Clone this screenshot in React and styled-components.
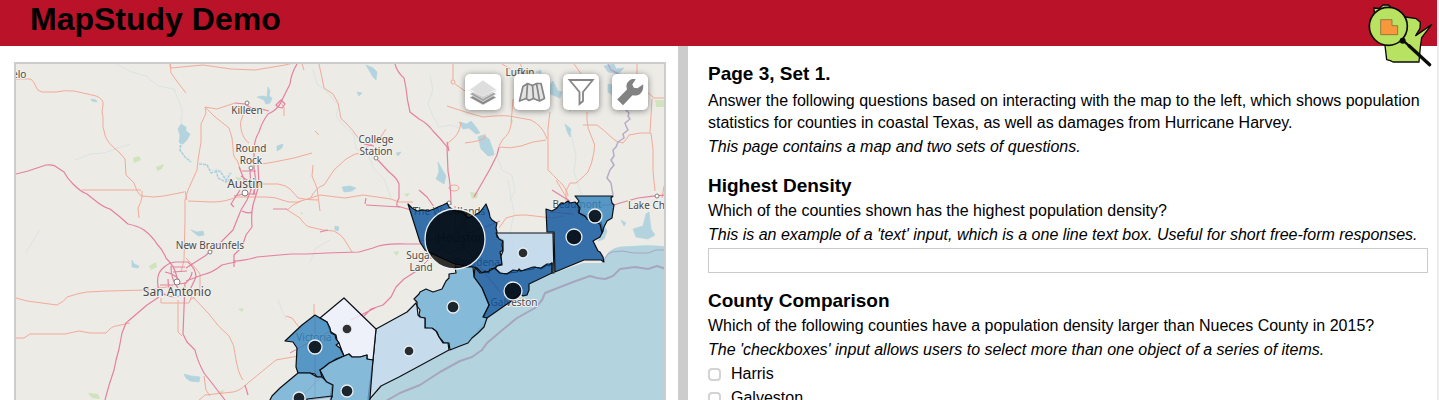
import React from "react";
import styled, { createGlobalStyle } from "styled-components";

const GlobalStyle = createGlobalStyle`
  * { box-sizing: border-box; }
  html, body, #root { height: 100%; }
  body {
    margin: 0;
    overflow: hidden;
    background: #fff;
    color: #000;
    font-family: "Liberation Sans", Arial, Helvetica, sans-serif;
    font-size: 16px;
    line-height: 22px;
  }
`;

const Page = styled.div`
  height: 100vh;
  display: flex;
  flex-direction: column;
  overflow: hidden;
  border-right: 2px solid #ececec;
`;

const Header = styled.header`
  position: relative;
  z-index: 2;
  flex: none;
  height: 46px;
  padding: 0 30px;
  background: #b91229;
`;

const Title = styled.h1`
  margin: 0;
  font-size: 32px;
  line-height: 38px;
  font-weight: bold;
`;

const LogoLink = styled.a`
  position: absolute;
  top: 3px;
  right: 3px;
  svg { display: block; }
`;

const Columns = styled.main`
  flex: 1;
  min-height: 0;
  display: grid;
  grid-template-columns: 678fr 10px 749fr;
`;

const MapPane = styled.section`
  min-width: 0;
  padding: 16px 12px 0 14px;
  display: flex;
`;

const MapFrame = styled.div`
  position: relative;
  flex: 1;
  min-width: 0;
  border: 2px solid #ccc;
  border-bottom: 0;
  background: #ecebe6;
  overflow: hidden;
`;

const MapArt = styled.svg`
  display: block;
  width: 100%;
  height: 100%;
  font-family: "Noto Sans", sans-serif;
`;

const Toolbar = styled.div`
  position: absolute;
  top: 10px;
  right: 16px;
  display: flex;
  gap: 13px;
`;

const ToolButton = styled.button`
  width: 36px;
  height: 36px;
  padding: 4px;
  border: 0;
  border-radius: 5px;
  background: #fff;
  box-shadow: 0 1px 6px rgba(0, 0, 0, 0.45);
  cursor: pointer;
  svg { display: block; width: 28px; height: 28px; }
`;

const Divider = styled.div`
  background: #ccc;
`;

const Questions = styled.section`
  min-width: 0;
  padding: 17px 9px 0 20px;
  overflow: hidden;
`;

const PageHeading = styled.h2`
  margin: 0 0 5px;
  font-size: 19px;
  line-height: 22px;
`;

const Block = styled.form`
  margin-top: 17px;
`;

const BlockHeading = styled.h3`
  margin: 0 0 3px;
  font-size: 19px;
  line-height: 22px;
`;

const Text = styled.p`
  margin: 0 0 2px;
`;

const Hint = styled.p`
  margin: 0 0 2px;
  font-style: italic;
`;

const TextInput = styled.input`
  display: block;
  width: 100%;
  height: 25px;
  padding: 2px 6px;
  border: 1px solid #ccc;
  background: #fff;
  font: inherit;
`;

const Option = styled.label`
  display: flex;
  align-items: center;
  gap: 10px;
  margin-bottom: 2px;
`;

const Checkbox = styled.input`
  appearance: none;
  width: 13px;
  height: 13px;
  margin: 0;
  border: 2px solid #d3d3d3;
  border-radius: 4px;
  background: #fff;
  &:checked { background: #08519c; }
`;

const WATER = "#b3d4de";

const lakes = [
  "M181 124l5 3v4l4 3-3 6-4 4-4-2 1-7-2-6z",
  "M268 87l2 4-1 5 3 2-2 5-4 1-2-4-7-3 6-1 4 1z",
  "M91 99l5 1 1 2-5-1z",
  "M277 146l6-2-1 4-5 3z",
  "M191 230l6 2 6-1 1 4-6 1z",
  "M132 260l2 4 5 2-1 2-6-1z",
  "M184 374l7 2 9 1-1 5-9-1-4-3z",
  "M342 187l8-1 6 2-4 3-8 1z",
  "M366 65l7 3 4 4-1 8-3-3-4-7z",
  "M357 92l5 1-3 3z",
  "M396 153l5-1-3 4z",
  "M438 162l5 9 3 5-2 8-8-5 3-7z",
  "M478 137l5-2 6 4 4 11 1 5-6 1-7-7z",
  "M459 122l8 2 4-3 5 6 4 6-4 1-7-6-6 1z",
  "M545 82l5 3 3-4 5 10 4 1-2 6-7-3-5-1z",
  "M604 66l10-2 2 5 8-1-4 4-1 8-5-7-6-1z",
  "M608 84l4 1v10l-4-3z",
  "M565 124l6 5-1 8-3-6z",
  "M536 72l5-2v4z",
  "M633 229l10-3 3-12 3-2 2 17 4 6-7 4-12-2z",
  "M603 224l4 7-3 8-6 2 4-8z",
  "M621 220l5 3-2 3z",
  "M335 226l4 1-1 4-3-1z",
  "M567 107l4 1-1 3z",
];

const rivers = [
  "M181 118l1 10M183 141l-3 10 5 6 5 5M200 163l6 1 5 7 7-2 7 8 5-5",
  "M116 64l16 8 14 4 12 10 16 3 8 20v12",
  "M75 160l16-6 13-1 14-5 12-4",
  "M313 70l4 14 10 8 12 14-3 10 8 10 10 9 2 14 12 6 6 14 10 10 7 18",
  "M430 76l3 14-5 14 5 12 6 11 12-2 9 3",
  "M496 154l6 16 10 5 3 16-6 10",
  "M571 134l5 22-2 16 8 24",
  "M612 96l5 10",
  "M508 180l6 34-4 18 4 16",
  "M310 262l6-14 14-8",
  "M278 300l8 20M40 230l-14 22",
];

const greens = [
  "M133 158l6-2 2 4-7 3z",
  "M156 167l8-3-2 5-5 2z",
  "M149 266l7-4 1 5-6 3z",
  "M235 177l7 1-3 4z",
  "M238 309l6-1-2 4z",
  "M88 393l10 1 2 5-8-1z",
  "M217 392l7-2-2 4z",
  "M470 192l8 1-1 5-5 1z",
  "M655 100h10v7h-9z",
  "M404 194l6-1-3 4z",
  "M393 252l6-1-2 5z",
  "M510 119l3 1-1 4z",
  "M300 212l3 1-1 2z",
];

const minorRoads = [
  "M16 79h15q4 4 5 8t6 5l14 0q8-2 18-1 14 3 22 5 8 3 7 9-2 8 0 12-1 10 2 18 2 8 14 17l6 7 1 16 8 8 3 8q2 4 6 6M82 190h59M142 191v6q-1 6-4 11l1 10M142 196q12 2 22 0l20-4M185 191l2 9",
  "M170 64l1 4 32-3 28 4 24 1 30-5 13-3M170 64l1 9 8 11 7 9",
  "M205 107l9 9 15 12q4 10 4 20t4 12l4 11M205 107l1 6-5 11v18l-3 18-1 10-9 20-3 10v20l-1 40-3 12",
  "M205 107l12 2 18-6M243 115q-4 8-2 14 2 10 8 14",
  "M188 201l24 1q14 0 24-5h30q10 0 16 3t16 2l22-7 25 3 18-3 28 4 8 3 14 0",
  "M262 184h16q8 1 12 5t8 9q8 2 20 2M310 199q6-12 14-14l10-15 12-11 9-5q8-1 13 0M287 210q6-6 14-9",
  "M262 164l12-2 20-4 18-5M313 165l-1 11 5 12 3 23",
  "M315 131l4 4",
  "M286 209l14 9q6 9 10 9 14 4 24 4 8 4 10 8l8 13",
  "M319 64l3 14 2 10 9 6 5 9 2 10q0 6 5 9 8 8 14 17M386 129l-8 12-14 7",
  "M302 64l2 6M279 101l5 6v9",
  "M453 64v16M455 84l10 7 10 8M447 106q24 8 36 11 18-2 26-1l22 4q12 6 16 19",
  "M520 64l8 12M513 99l-2 26q-2 10-8 14l-4 7M465 143q16-2 20-5v-4",
  "M499 147q12 2 22-1l12-4 13-2M550 112l-2 16v42q10 10 14 14 6 8 6 12",
  "M587 112v8q0 8 5 18 4 6 2 14-2 12-6 20-8 8-12 11h-6l-4 8v14M583 125h14q8 6 14 12 6 6 12 6 4-4 6-8 12-3 22-2l2 16v22l2 20",
  "M637 64v12q2 10 8 14l9 8h12M652 99l-2 33M574 64l8 11M502 64l20 12",
  "M16 298l11 3 30 4q8-4 10-8 12-4 20-5l20-1 40-1 26-4",
  "M16 338h8l6-4 35 0 14-3 11 2 16 0q6-7 10-7l14-3",
  "M178 300v32l4 4M161 298v5h28l3-8M193 297l16 17q10 14 20 22 6 10 6 18 3 20 8 26",
  "M298 356l-22 4-28 23q-8 8-15 9l-28 3-7 6M204 376l2 14 4 6",
  "M286 316l6 2 7 9M314 304v12M186 258q10 10 14 16v14q-2 8-10 12",
  "M499 228l7-10q10-4 20-3l26 3 12-2M556 180l12 20 2 12M664 186l-2 12",
  "M446 146q2-4 8-8 6-6 7-16",
];

const majorRoads = [
  "M297 64q-6 10-7 20l-8 16q-4 10-14 14-6 8-9 18-4 6-5 16v20l2 14q-2 8-2 12M250 170l1 20-4 10-6 10-8 20-12 12-16 14-19 12",
  "M235 103l10 1 6 4q10 0 18 3",
  "M276 105l5-5 4 4-3 4-4-1zM16 174l12-3 18-6q8-1 12 3l6 4q3 6 9 12 8 8 14 10l10 8q8 6 13 7l10 8 8 7q10 2 16 6 8 6 13 14 6 6 9 14 8 8 10 16l2 8",
  "M258 165l1 20-6 20q-2 8-1 22l-6 8-4 12-8 8v12M233 261q10 0 24-4l34-3h16l20-1 32-1 14-4q10-5 34-4h14",
  "M186 281l16-6q10-2 20-10 8-2 14-3",
  "M162 269q7-7 14-7h12q8 7 8 15l-8 17q-14 4-20 2-8-3-10-9-2-12 4-18zM160 285l11 0 15-2q6-6 6-11M165 272q10 2 14 8M171 266q0 14 7 22",
  "M173 267h12M173 272l14-1M168 279q0 10 4 13",
  "M159 297l-12 8-21 18-4 10-3 16q-3 10-5 21-5 14-9 30",
  "M185 282l-2 52 4 8 8 8q2 10 9 23 8 10 14 18l7 9",
  "M242 171h14M241 176l6 4 4 10M239 167l5 12 0 9M256 185l-3 10M234 196l10-2h12M240 190l-9 14 3 3M242 211q6 3 10 1",
  "M395 64q2 8 9 14l2 10q1 12 4 24l9 7q8 4 14 12 8 8 14 16l1 24q3 16 3 34M447 142l2 9",
  "M364 144l10 2M376 158l13 14q8 6 10 12v14q-3 6-2 8l14 4M419 190l8 7 10 14M499 147l-2 8-7 14-8 14-8 14",
  "M365 204l1-6M366 205l34 2",
  "M418 270l-14 9-8 8-5 10-8 8-12 4-7 7M375 308l-24 12",
  "M552 190l24 15h38l6-2 18-5q14-2 28-3",
  "M273 209h14M320 232l8-2M245 385l3 10",
];

const counties = [
  { name: "Harris", fill: "#08519c", d: "M408 204L412 208 417 211 424 210 428 211 434 209 438 207 443 205 447 203 449 207 455 211 463 212 468 218 475 215 480 212 486 204 489 212 490 217 492 220 495 222 497 223 496 228 497 232 497 237 499 238 503 240 502 245 503 250 500 252 501 256 502 264 497 266 495 268 490 269 489 273 485 271 482 273 477 268 473 267 455 264 437 256 425 250 420 242z" },
  { name: "Chambers", fill: "#bdd7ee", d: "M496 233h57l1 40-2 0v-10l-3 3-2-1-6 4-6-2-2 2-12 2-2-2-2 3-8 1-4 1-5-1-5-4 2-3 5-1-1-9 2-5v-10l-4-2z" },
  { name: "Jefferson", fill: "#08519c", d: "M546 209l6 2 5-3 3-4 5-1 3-2 2 2 5-1 4 4v7l9 5 5 2 8 2 2 9-3 6-7 4 5 10 2 1 3 5 1 5-3-2h-17l-29 12-1-40h-7z" },
  { name: "Orange", fill: "#3182bd", d: "M575 196h38l-2 2 1 5 2 2-1 6-1 7-5 3-3 6-2 6-2-9-8-3-5-2-2-3-6-3 1-5-3-4 2-3z" },
  { name: "Galveston", fill: "#08519c", d: "M475 267l5 6 7-1 8-4 5 5 7 1 6-4 8 1 12-4 8 1 6-4 3 0 2-1v10l-23 11v6l-2 5-4 1-3-2-10 8-23 16-4-1 6-12-7-17-8-11z" },
  { name: "Brazoria", fill: "#6baed6", d: "M455 267l18 0 1 10 8 11 7 17-6 12 4 1-3 9-6 6-6 5-4 5-8 3-10 4-1-7h-5l-5-6-2-5-4-3-8-1v-10h-4l-2-3 1-5-3-4 0-4-3-3 5-5 1-2 6-3 7 3 9-3 4-8 3-3 0-4 7-1z" },
  { name: "Matagorda", fill: "#bdd7ee", d: "M376 329l31-17 9-9 1 3 1 9 2 2 5 1v10h7l4 3 3 6 4 6h5l1 7-50 27-18 9-12 14-1-1 5-39z" },
  { name: "Jackson", fill: "#f0f2ff", d: "M344 298l32 31-3 31-6-1v-4l-7 2h-8l-3-3-5 2-2-5-3-8-2-3-1-5-5-3-2-4-2-6-7-4z" },
  { name: "Victoria", fill: "#3182bd", d: "M315 315l5 3 7 4 3 6 1 5 4 2 1 4 3 4-3 2 4 3 4 8-8 3-13 9-3 2 2 7-5 0-2-3-5-1h-12l-2-6 1-19-4-6-8-1 17-16z" },
  { name: "Calhoun", fill: "#6baed6", d: "M323 368l6-5 15-7 5-2 3 3h8l7-2v4l6 1-4 50h-40l3-25-6-3-6-12z" },
  { name: "Refugio", fill: "#6baed6", d: "M298 373h12l7 4h5l5 5 6 3-1 12-25 3v10h-42l7-14 8-8z" },
  { name: "Aransas", fill: "#bdd7ee", d: "M307 399l25-3-4 14h-21z" },
];

const circles = [
  [455, 239, 30], [574, 237, 8], [595, 216, 7], [523, 253, 5], [513, 291, 9], [453, 307, 6],
  [409, 351, 5], [347, 329, 5], [315, 347, 7], [347, 391, 6], [299, 398, 6],
];

const towns = [
  [247, 103, 2], [251, 168, 2], [245, 193, 3], [210, 252, 2], [177, 282, 3], [376, 158, 2], [449, 203, 2], [657, 196, 2],
];

const labels = [
  [12, 78, "elo", 10, "start"],
  [247, 114, "Killeen", 10],
  [251, 152, "Round", 10],
  [251, 164, "Rock", 10],
  [245, 188, "Austin", 12],
  [376, 143, "College", 10],
  [376, 155, "Station", 10],
  [520, 76, "Lufkin", 10],
  [210, 249, "New Braunfels", 10],
  [177, 296, "San Antonio", 12],
  [449, 215, "The Woodlands", 10],
  [461, 242, "Houston", 12],
  [420, 259, "Sugar", 10],
  [421, 271, "Land", 10],
  [477, 266, "Pasadena", 10],
  [577, 208, "Beaumont", 10],
  [514, 306, "Galveston", 10],
  [314, 341, "Victoria", 10],
  [628, 209, "Lake Charles", 10, "start"],
];

function CountyMap() {
  return (
    <MapArt viewBox="16 64 648 336" preserveAspectRatio="xMinYMin slice" role="img" aria-label="Map of coastal Texas counties">
      <path fill={WATER} d="M670 247q-20-3-37-1-16 0-20 3-8 4-10 14h-20l-29 10-25 11v8l-42 26-20 25-17 7-50 27-18 9-16 20h320z" />
      <g fill="#cfe3bd">{greens.map((d) => <path key={d} d={d} />)}</g>
      <g fill="none" stroke="#dbe4e2">{rivers.map((d) => <path key={d} d={d} />)}</g>
      <path fill="none" stroke="#a9d0de" strokeWidth="1.5" strokeDasharray="3 1" d="M181 141l-1 9 5 7 6 5M199 164l8 1 4 8 9-2 6 9 5-7M216 170l2 8 8 4 4-3" />
      <g fill={WATER} stroke={WATER} strokeWidth="0.7" strokeLinejoin="round">{lakes.map((d) => <path key={d} d={d} />)}</g>
      <g fill="none" stroke="#f3aa98" strokeLinejoin="round">
        {minorRoads.map((d) => <path key={d} d={d} />)}
        <circle cx="453" cy="82" r="2" />
        <ellipse cx="454" cy="188" rx="5" ry="3" />
      </g>
      <g fill="none" stroke="#e5819f" strokeWidth="1.2" strokeLinejoin="round">{majorRoads.map((d) => <path key={d} d={d} />)}</g>
      <g fill="none" stroke="#e5819f">
        <path d="M441 219l12-8 11 8 3 14-4 14-14 6-12-10-2-12zM420 241l40-4 40-16M455 206l1 30 20 26 24 30M470 210l-14 28-20 14-18 18M568 200l10 12 20 6M550 212l24 2M315 318v80M290 353l40-22M298 400l24-24" />
      </g>
      <path fill="none" stroke="#b9aac8" strokeWidth="1.5" strokeLinejoin="round" d="M608 64l3 6 6 3 3 10 2 12 6 12-2 3 3 3-1 3 2 3-5 4 1 3 2 4-5 4 1 4-6 4-2 5-3 3 1 6-3 4 3 5-4 5-3 8 4 5 2 12" />
      <g fill="none" stroke="#a7a5c0" strokeLinejoin="round">
        <path d="M602 263l6-9 4-2 10-1 12 2 14 0 8-3 9 0" />
        <path strokeWidth="2" d="M666 269l-3-1-6-2-9 3-13-2-15 2-7 7-8 3-8-1-7-2-17 6-28 11-3 7-7 8-18 10-17 14-13 11-5 7-10 7-12 4-20 11-20 13-20 8-14 8" />
      </g>
      <g fill="#fff" stroke="#85807c">{towns.map(([x, y, r]) => <circle key={`${x}-${y}`} cx={x} cy={y} r={r} />)}</g>
      <g fill="#4b4b4b" stroke="#f2f1ed" strokeWidth="2" strokeLinejoin="round" paintOrder="stroke">
        {labels.map(([x, y, text, size, anchor]) => (
          <text key={text} x={x} y={y} fontSize={size} textAnchor={anchor || "middle"}>{text}</text>
        ))}
      </g>
      <g fillOpacity="0.8" stroke="#0b0f14" strokeWidth="1.2" strokeLinejoin="round">
        {counties.map((c) => <path key={c.name} d={c.d} fill={c.fill} />)}
      </g>
      <g fill="#000" fillOpacity="0.8" stroke="#e8eef3" strokeWidth="1.3">
        {circles.map(([x, y, r]) => <circle key={`${x}-${y}`} cx={x} cy={y} r={r} />)}
      </g>
    </MapArt>
  );
}

const LayersIcon = () => (
  <svg viewBox="0 0 28 28" stroke="#fff" strokeWidth="0.6">
    <path fill="#8b8b8b" d="M14 12l13.500 7.500L14 27 .500 19.500z" />
    <path fill="#a2a2a2" d="M14 8.500L27.500 16 14 23.500.500 16z" />
    <path fill="#8b8b8b" d="M.500 12L14 19.500 27.500 12v.800L14 20.500.500 12.800z" />
    <path fill="#dedede" d="M14 2l13.500 9.500L14 18.500.500 11.500z" />
  </svg>
);

const FoldedMapIcon = () => (
  <svg viewBox="0 0 28 28" fill="#e4e4e4" stroke="#858585" strokeWidth="1.700" strokeLinejoin="round">
    <path d="M5 8.500L9.500 5.500l5 2 4-2 4.500 0L26.500 20.500 21.500 23l-6-2.500-4.500 2L8 20.500 1.500 23z" />
    <path fill="none" d="M9.500 5.500L8.500 20.500M14.500 7.500l1 13M18.500 5.500L21.500 22.500" />
  </svg>
);

const FilterIcon = () => (
  <svg viewBox="0 0 28 28" fill="none" stroke="#858585" strokeWidth="1.800">
    <path d="M2.500 2h23.300L16 14v9L12.500 26V14z" />
  </svg>
);

const WrenchIcon = () => (
  <svg viewBox="0 0 28 28" fill="#828282">
    <path d="M19.700 1.200C17 .8 15 1.300 13.500 2.400 11 4.200 10.200 6.500 10.500 9l.5 2.500L1.200 21.500 7 27.200 16.500 17.300c3 .7 6 .2 8-1.800 2.200-2 3-5 2.700-9.200L21.500 10.200 17.800 9.800 16.300 6.500z" />
  </svg>
);

const Logo = () => (
  <svg width="66" height="65" viewBox="83 8 198 195">
    <path fill="#b8e261" stroke="#0b0b0b" strokeWidth="4" strokeLinejoin="round" d="M103 39L100 23 118 24 128 14 144 14 154 24 196 50 228 55 240 66 239 84 226 106 274 73 244 112 240 140 236 185H158L150 181 139 178 134 135z" />
    <circle cx="144" cy="78" r="57" fill="#b8e261" stroke="#0b0b0b" strokeWidth="5" />
    <path fill="#f8983d" stroke="#7b5735" strokeWidth="2" d="M121 58h34v18h17v27h-51z" />
    <path stroke="#0b0b0b" strokeWidth="7" d="M182 115l26 23" />
    <path stroke="#0b0b0b" strokeWidth="10" strokeLinecap="round" d="M206 136l62 57" />
    <circle cx="187" cy="121" r="9" fill="#0b0b0b" />
  </svg>
);

const tools = [
  ["Layers", LayersIcon],
  ["Basemap", FoldedMapIcon],
  ["Filter", FilterIcon],
  ["Settings", WrenchIcon],
];

export default function App() {
  return (
    <Page>
      <GlobalStyle />
      <Header>
        <Title>MapStudy Demo</Title>
        <LogoLink href="#" aria-label="Cartography Lab"><Logo /></LogoLink>
      </Header>
      <Columns>
        <MapPane>
          <MapFrame>
            <CountyMap />
            <Toolbar>
              {tools.map(([name, Icon]) => (
                <ToolButton key={name} type="button" aria-label={name}><Icon /></ToolButton>
              ))}
            </Toolbar>
          </MapFrame>
        </MapPane>
        <Divider />
        <Questions>
          <PageHeading>Page 3, Set 1.</PageHeading>
          <Text>
            Answer the following questions based on interacting with the map to the left, which shows population
            statistics for counties in coastal Texas, as well as damages from Hurricane Harvey.
          </Text>
          <Hint>This page contains a map and two sets of questions.</Hint>
          <Block>
            <BlockHeading>Highest Density</BlockHeading>
            <Text id="density">Which of the counties shown has the highest population density?</Text>
            <Hint>This is an example of a 'text' input, which is a one line text box. Useful for short free-form responses.</Hint>
            <TextInput type="text" aria-labelledby="density" />
          </Block>
          <Block>
            <BlockHeading>County Comparison</BlockHeading>
            <Text>Which of the following counties have a population density larger than Nueces County in 2015?</Text>
            <Hint>The 'checkboxes' input allows users to select more than one object of a series of items.</Hint>
            {["Harris", "Galveston"].map((name) => (
              <Option key={name}><Checkbox type="checkbox" />{name}</Option>
            ))}
          </Block>
        </Questions>
      </Columns>
    </Page>
  );
}
